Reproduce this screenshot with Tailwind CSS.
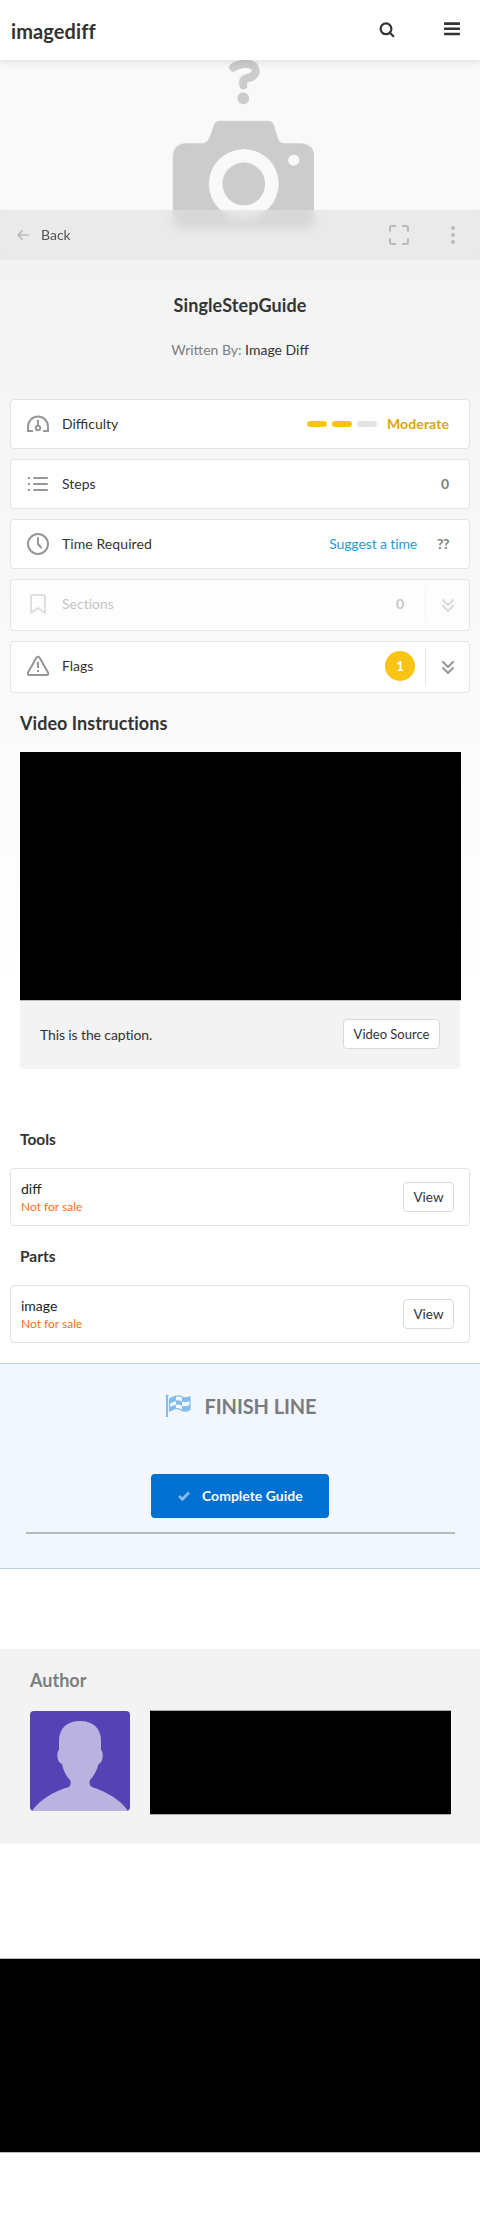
<!DOCTYPE html>
<html lang="en">
<head>
<meta charset="utf-8">
<title>SingleStepGuide</title>
<script src="https://cdn.jsdelivr.net/npm/@tailwindcss/browser@4"></script>
</head>
<body class="bg-white font-['Lato',sans-serif] text-sm text-[#333]">
<div class="flex h-[2227px] w-[480px] flex-col overflow-hidden bg-[linear-gradient(#f3f3f3_260px,#fff_1000px)]">
  <header class="relative z-10 flex h-[60px] shrink-0 items-center bg-white pl-[11px] pr-5 shadow-[0_0_10px_rgba(0,0,0,0.15)]">
    <h1 class="mt-px text-[20px] leading-7 font-bold tracking-[0.1px]">imagediff</h1>
    <svg class="mr-[49px] ml-auto" width="16" height="16" viewBox="0 0 16 16" fill="none" stroke="#333" stroke-width="2.2" stroke-linecap="round"><circle cx="7" cy="6.800" r="5.400"/><path d="M11 10.800l3.300 3.400"/></svg>
    <svg class="mb-[3px]" width="16" height="14" viewBox="0 0 16 14" fill="#333"><rect y="0.300" width="16" height="2.600" rx=".7"/><rect y="5.500" width="16" height="2.600" rx=".7"/><rect y="10.700" width="16" height="2.600" rx=".7"/></svg>
  </header>

  <section class="relative h-[200px] shrink-0 overflow-hidden bg-[#f9f9f9]">
    <svg class="block" width="480" height="200" viewBox="0 60 480 200">
      <defs><filter id="inset"><feDropShadow dx="-.3" dy="-.5" stdDeviation=".4" flood-color="#888" flood-opacity=".6"/></filter></defs>
      <g filter="url(#inset)">
        <path d="M233.500 67.800C237 65 248.500 61.500 254 66.500C258.500 73 254 77.500 247 78.700C242.500 79.500 243 83 243.500 85.700" fill="none" stroke="#ccc" stroke-width="7.400" stroke-linecap="round" stroke-linejoin="round"/>
        <circle cx="243.500" cy="98.700" r="5.500" fill="#ccc"/>
        <path fill="#ccc" fill-rule="evenodd" d="M173.500 156Q174 144.500 187 144H203Q208 144 210.500 137L214.500 125.500Q216 121.700 219 121.700H268.500Q272.500 121.700 274 126L277.500 138Q279 144 285 144H300Q313 144.500 314 155V220Q314 229 305 229H182Q173.500 229 173.500 220ZM244 149A35.300 35.300 0 1 0 244 219.600A35.300 35.300 0 1 0 244 149ZM294 154.500A6 6 0 1 0 294 166.500A6 6 0 1 0 294 154.500Z"/>
        <circle cx="244" cy="184.300" r="21" fill="#ccc"/>
      </g>
    </svg>
    <nav class="absolute inset-x-0 bottom-0 flex h-[50px] items-center bg-[#e0e0e0]/60 pl-[17px] pr-[25px] text-[#555] backdrop-blur-[5px]">
      <svg width="12" height="10" viewBox="0 0 12 10" fill="none" stroke="#b9b9b9" stroke-width="1.600" stroke-linecap="round" stroke-linejoin="round"><path d="M11.200 5H1M5 .9L1 5l4 4.100"/></svg>
      <span class="ml-3 leading-5">Back</span>
      <svg class="ml-auto" width="20" height="20" viewBox="0 0 20 20" fill="none" stroke="#b9b9b9" stroke-width="2" stroke-linecap="round"><path d="M1 6V3a2 2 0 0 1 2-2h3M14 1h3a2 2 0 0 1 2 2v3M19 14v3a2 2 0 0 1-2 2h-3M6 19H3a2 2 0 0 1-2-2v-3"/></svg>
      <svg class="ml-[42px]" width="4" height="18" viewBox="0 0 4 18" fill="#b9b9b9"><circle cx="2" cy="2" r="2"/><circle cx="2" cy="9" r="2"/><circle cx="2" cy="16" r="2"/></svg>
    </nav>
  </section>

  <section class="flex h-[139px] shrink-0 flex-col items-center pt-8">
    <h2 class="text-lg leading-[26px] font-bold tracking-[0.1px]">SingleStepGuide</h2>
    <p class="mt-[22px] leading-5 text-[#7e7e7e]">Written By: <a class="text-[#333]">Image Diff</a></p>
  </section>

  <ul class="mx-[10px] flex shrink-0 flex-col gap-[10px]">
    <li class="flex h-[50px] items-center rounded border border-[#e4e4e4] bg-white pr-5 pl-[15px]">
      <svg width="24" height="24" viewBox="0 0 24 24" fill="none" stroke="#979797" stroke-width="2"><path d="M7 19H2v-4.500a10 10 0 0 1 20 0V19h-5M12 8v6"/><circle cx="12" cy="16" r="2.200"/></svg>
      <span class="ml-3 leading-5">Difficulty</span>
      <span class="ml-auto flex gap-[5px]"><i class="h-[6px] w-5 rounded-full bg-[#f9c413]"></i><i class="h-[6px] w-5 rounded-full bg-[#f9c413]"></i><i class="h-[6px] w-5 rounded-full bg-[#e4e4e4]"></i></span>
      <b class="ml-[10px] w-[62px] leading-5 tracking-[0.1px] text-[#daa60a]">Moderate</b>
    </li>
    <li class="flex h-[50px] items-center rounded border border-[#e4e4e4] bg-white pr-5 pl-[15px]">
      <svg width="24" height="24" viewBox="0 0 24 24" fill="none" stroke="#979797" stroke-width="2" stroke-linecap="round"><path d="M8 6h13M8 12h13M8 18h13"/><path stroke-linecap="butt" d="M2 6h2M2 12h2M2 18h2"/></svg>
      <span class="ml-3 leading-5">Steps</span>
      <b class="ml-auto leading-5 text-[#7e7e7e]">0</b>
    </li>
    <li class="flex h-[50px] items-center rounded border border-[#e4e4e4] bg-white pr-5 pl-[15px]">
      <svg width="24" height="24" viewBox="0 0 24 24" fill="none" stroke="#979797" stroke-width="2" stroke-linecap="round" stroke-linejoin="round"><circle cx="12" cy="12" r="10"/><path d="M12 6v6l3 3.500"/></svg>
      <span class="ml-3 leading-5 tracking-[0.08px]">Time Required</span>
      <a class="ml-auto leading-5 tracking-[-0.12px] text-[#1e9bd7]">Suggest a time</a>
      <b class="ml-5 leading-5 tracking-[-0.5px] text-[#7e7e7e]">??</b>
    </li>
    <li class="flex h-[52px] items-center rounded border border-[#e4e4e4] bg-[#fdfdfd] pr-[14px] pb-[2px] pl-[15px] text-[#c5c5c5]">
      <svg width="24" height="24" viewBox="0 0 24 24" fill="none" stroke="#dfdfdf" stroke-width="2" stroke-linecap="round" stroke-linejoin="round"><path d="M19 21l-7-5-7 5V5a2 2 0 0 1 2-2h10a2 2 0 0 1 2 2z"/></svg>
      <span class="ml-3 leading-5 tracking-[0.01px]">Sections</span>
      <b class="ml-auto w-[30px] text-center leading-5">0</b>
      <span class="ml-[10px] h-9 w-px bg-[#f3f3f3]"></span>
      <svg class="mt-px ml-[15px]" width="14" height="14" viewBox="0 0 14 14" fill="none" stroke="#dadada" stroke-width="2" stroke-linecap="round" stroke-linejoin="round"><path d="M2 2l5 5 5-5M2 8l5 5 5-5"/></svg>
    </li>
    <li class="flex h-[52px] items-center rounded border border-[#e4e4e4] bg-white pr-[14px] pb-[2px] pl-[15px]">
      <svg width="24" height="24" viewBox="0 0 24 24" fill="none" stroke="#979797" stroke-width="2" stroke-linejoin="round"><path d="M10.500 3.600L1.900 18.800A1.500 1.500 0 0 0 3 21h18a1.500 1.500 0 0 0 1.100-2.200L13.500 3.600a1.700 1.700 0 0 0-3 0zM12 8v6M12 16v2"/></svg>
      <span class="ml-3 leading-5">Flags</span>
      <b class="ml-auto size-[30px] rounded-full bg-[#f9c413] text-center leading-[30px] text-white">1</b>
      <span class="ml-[10px] h-[37px] w-px bg-[#e4e4e4]"></span>
      <svg class="mt-px ml-[15px]" width="14" height="14" viewBox="0 0 14 14" fill="none" stroke="#979797" stroke-width="2" stroke-linecap="round" stroke-linejoin="round"><path d="M2 2l5 5 5-5M2 8l5 5 5-5"/></svg>
    </li>
  </ul>

  <section class="shrink-0 px-5 pt-[17px]">
    <h2 class="h-[42px] text-lg leading-[26px] font-bold tracking-[0.03px]">Video Instructions</h2>
    <div class="h-[249px] w-[441px] border-b border-[#bbb] bg-black"></div>
    <div class="flex h-[68px] justify-between rounded-b bg-[#f3f3f3] px-5 pt-[18px]">
      <p class="mt-[6px] leading-5 tracking-[-0.12px]">This is the caption.</p>
      <button class="h-[30px] w-[97px] rounded border border-[#dadada] bg-white text-[13px] leading-7 whitespace-nowrap">Video Source</button>
    </div>
  </section>

  <section class="mx-[10px] mt-[59px] shrink-0">
    <h3 class="h-10 pl-[10px] text-[15.500px] leading-[22px] font-bold">Tools</h3>
    <div class="flex h-[58px] items-start justify-between rounded border border-[#e4e4e4] bg-white pr-[15px] pl-[10px]">
      <div class="pt-[11px]"><p class="leading-[18px] text-[#212426]">diff</p><p class="text-xs leading-[17px] text-[#fe6f15]">Not for sale</p></div>
      <button class="mt-[13px] h-[30px] w-[51px] rounded border border-[#dadada] bg-white text-[13.500px] leading-7">View</button>
    </div>
    <h3 class="mt-[19px] h-10 pl-[10px] text-[15.500px] leading-[22px] font-bold">Parts</h3>
    <div class="flex h-[58px] items-start justify-between rounded border border-[#e4e4e4] bg-white pr-[15px] pl-[10px]">
      <div class="pt-[11px]"><p class="leading-[18px] text-[#212426]">image</p><p class="text-xs leading-[17px] text-[#fe6f15]">Not for sale</p></div>
      <button class="mt-[13px] h-[30px] w-[51px] rounded border border-[#dadada] bg-white text-[13.500px] leading-7">View</button>
    </div>
  </section>

  <section class="mt-5 flex h-[206px] shrink-0 flex-col items-center border-y border-[#b5d5ef] bg-[#f2f7ff] pt-[28px]">
    <div class="flex h-7 items-start pl-px">
      <svg class="mt-[2px] mr-[14px]" width="26" height="24" viewBox="0 0 26 24" fill="none" stroke="#83bceb"><path stroke-width="2" d="M2 2v21"/><circle cx="2" cy="2" r="1.100"/><path stroke-width="1.200" d="M4.500 5C11 1 15 1 18 3.500Q21 4.500 25 2.800V15.200C21 18.500 17 17 14.500 15Q11 13.500 4.500 17Z"/><path fill="#83bceb" stroke="none" d="M4.500 5L11 2.600V7L4.500 9.500ZM17 3Q20 4.500 25 2.800V7Q21 9 17 7.500ZM11 6.500Q14 5.500 17 7.500V12Q14 10 11 10.800ZM4.500 13L11 10.800V14.300L4.500 17ZM17 12Q21 13 25 11V15.200Q21 18 17 16.500Z"/></svg>
      <h2 class="text-[20px] leading-7 font-bold tracking-[-0.1px] text-[#7b7b7b]">FINISH LINE</h2>
    </div>
    <button class="mt-[54px] flex h-11 w-[178px] shrink-0 items-center rounded bg-[#0071d0] pl-[27px] font-bold text-[#f8fcff]">
      <svg class="mr-3" width="12" height="10" viewBox="0 0 12 10" fill="none" stroke="#83bceb" stroke-width="2.800"><path d="M1 5l3.400 3.300L11 1.500"/></svg>
      <span class="leading-5">Complete Guide</span>
    </button>
    <div class="mt-[14px] h-[2px] w-[429px] shrink-0 bg-[#b6bbbf]"></div>
  </section>

  <section class="mt-20 h-[195px] shrink-0 bg-[#f3f3f3] px-[30px] pt-[18px]">
    <h2 class="h-[43px] text-lg leading-[26px] font-bold text-[#7e7e7e]">Author</h2>
    <div class="flex gap-5">
      <svg class="mt-px shrink-0 rounded" width="100" height="100" viewBox="0 0 100 100"><path fill="#5543b5" d="M0 0h100v100H0z"/><path fill="#bab3e0" d="M50 10C64 10 71 18 71 30V39C74 41 73 52 68.500 53C67 60 63 66 60 69C59 73 60 75 62 76C77 81 91 89 98 100H2C9 89 24 80 39 76C41 74 41 71 40 69C36 65 33 59 32 53C27 52 26 41 29 39V30C29 18 36 10 50 10Z"/></svg>
      <div class="h-[105px] w-[301px] shrink-0 border-y border-[#aaa] bg-black"></div>
    </div>
  </section>
  <footer class="mt-[114px] h-[195px] shrink-0 border-y border-[#bbb] bg-black"></footer>
</div>
</body>
</html>
